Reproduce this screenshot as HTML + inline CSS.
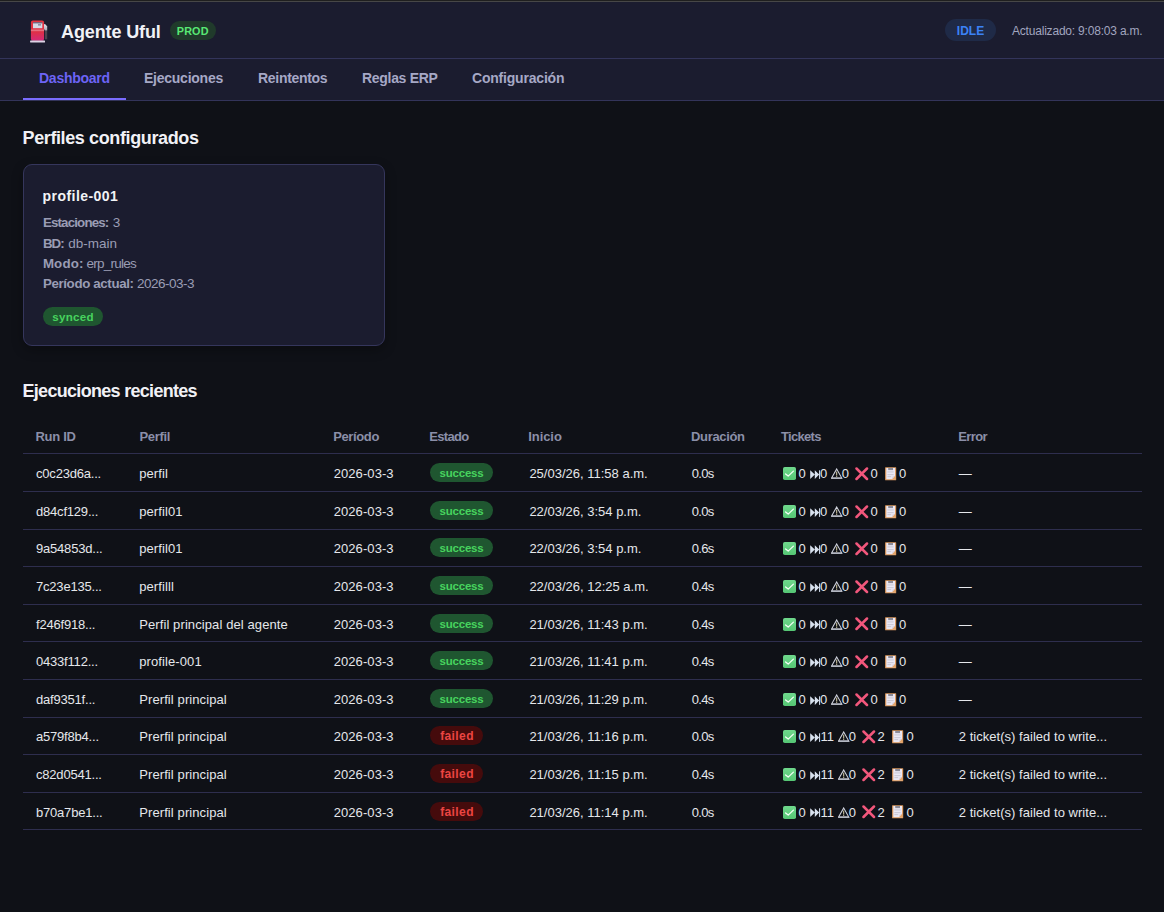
<!DOCTYPE html>
<html><head><meta charset="utf-8">
<style>
*{box-sizing:border-box;margin:0;padding:0}
html,body{width:1164px;height:912px;overflow:hidden;background:#0f1117;font-family:"Liberation Sans",sans-serif;color:#e5e7eb}
.a{position:absolute;white-space:nowrap}
#tb0{left:0;top:0;width:1164px;height:1px;background:#1f1f1f}
#tb1{left:0;top:1px;width:1164px;height:1px;background:#474747}
#hdr{left:0;top:2px;width:1164px;height:57px;background:#1b1c2f;border-bottom:1px solid #33345a}
#nav{left:0;top:59px;width:1164px;height:42px;background:#1b1c2f;border-bottom:1px solid #33345a}
.title{font-weight:700;font-size:18px;color:#f1f1f6;line-height:20px}
.pill{border-radius:999px;font-weight:700;text-align:center}
.tab{font-weight:700;font-size:14px;color:#a6a8c6;line-height:16px}
.h2{font-weight:700;font-size:18px;color:#f1f1f6;line-height:20px}
#card{left:23px;top:164px;width:362px;height:182px;background:#1b1c2f;border:1px solid #35365c;border-radius:9px;box-shadow:0 4px 12px rgba(0,0,0,.3)}
.kv{font-size:13px;color:#9a9cb4;line-height:16px}
.kv b{color:#9a9cb4}
.th{font-weight:700;font-size:13px;color:#8b8fa8;line-height:16px}
.td{font-size:13px;color:#e5e7eb;line-height:16px}
.hl{left:23px;width:1119px;height:1px;background:#2e2e4e}
.ic{position:absolute;line-height:0}
.ic svg{display:block}
</style></head><body>
<div id="tb0" class="a"></div><div id="tb1" class="a"></div>
<div id="hdr" class="a"></div>
<div id="nav" class="a"></div>

<div class="ic" style="left:30px;top:19.5px"><svg width="18" height="23" viewBox="0 0 18 23">
<defs><linearGradient id="pg" x1="0" y1="0" x2="0" y2="1"><stop offset="0" stop-color="#e5323f"/><stop offset="0.55" stop-color="#df3045"/><stop offset="1" stop-color="#d42a7a"/></linearGradient>
<linearGradient id="hg" x1="0" y1="0" x2="0" y2="1"><stop offset="0" stop-color="#e4e4ec"/><stop offset="1" stop-color="#a9a6b4"/></linearGradient></defs>
<rect x="0.9" y="0.4" width="13.2" height="20.4" rx="2" fill="url(#pg)"/>
<rect x="3" y="2.4" width="9.3" height="5.8" fill="#d6d9e6"/>
<rect x="3" y="2.4" width="9.3" height="0.9" fill="#3f3f5c"/>
<rect x="8" y="4.5" width="3" height="0.8" fill="#4a4868"/>
<rect x="0.9" y="9.5" width="13.2" height="1.7" fill="#e57b8a" opacity="0.85"/>
<path d="M15 10.4 L17.2 10.4 L17.2 19.3 L15 19.3 Z" fill="#4b4550"/>
<path d="M14 4.1 L15.6 4.6 L17.2 6.6 L17.2 10.4 L15 10.4 L14 9 Z" fill="url(#hg)"/>
<rect x="0.1" y="20.5" width="14.9" height="2" rx="0.5" fill="#ddd3e6"/>
</svg></div>
<div class="a title" style="left:61px;top:22px;letter-spacing:-0.12px">Agente Uful</div>
<div class="a pill" style="left:170px;top:21px;width:46px;height:19px;background:#203a2b;color:#58e874;font-size:10.8px;line-height:20px;letter-spacing:0.15px;padding-right:0.6px">PROD</div>
<div class="a pill" style="left:945px;top:19px;width:51px;height:22px;background:#1f2a47;color:#3b82f6;font-size:12px;line-height:24px">IDLE</div>
<div class="a" style="left:1012px;top:24px;font-size:12px;letter-spacing:-0.2px;line-height:14px;color:#a1a5bf">Actualizado: 9:08:03 a.m.</div>
<div class="a tab" style="left:39px;top:70px;color:#6d64f6;letter-spacing:-0.25px">Dashboard</div>
<div class="a tab" style="left:144px;top:70px;color:#a6a8c6;letter-spacing:-0.25px">Ejecuciones</div>
<div class="a tab" style="left:258px;top:70px;color:#a6a8c6;letter-spacing:-0.3px">Reintentos</div>
<div class="a tab" style="left:362px;top:70px;color:#a6a8c6;letter-spacing:-0.3px">Reglas ERP</div>
<div class="a tab" style="left:472px;top:70px;color:#a6a8c6;letter-spacing:-0.2px">Configuración</div>
<div class="a" style="left:23px;top:98px;width:103px;height:2px;background:#7a6cff"></div>
<div class="a h2" style="left:22.5px;top:128px;font-size:18px;letter-spacing:-0.38px">Perfiles configurados</div>
<div id="card" class="a"></div>
<div class="a" style="left:42.5px;top:188px;font-size:14px;font-weight:700;color:#f3f4f6;line-height:16px;letter-spacing:0.46px">profile-001</div>
<div class="a kv" style="left:42.9px;top:215px;font-weight:700;font-size:13.3px;letter-spacing:-0.83px">Estaciones:</div>
<div class="a kv" style="left:112.7px;top:215px;font-size:13.5px;letter-spacing:0px">3</div>
<div class="a kv" style="left:42.9px;top:236px;font-weight:700;font-size:13.3px;letter-spacing:-0.95px">BD:</div>
<div class="a kv" style="left:68.2px;top:236px;font-size:13.5px;letter-spacing:0px">db-main</div>
<div class="a kv" style="left:42.9px;top:256px;font-weight:700;font-size:13.3px;letter-spacing:0.15px">Modo:</div>
<div class="a kv" style="left:86.4px;top:256px;font-size:13.5px;letter-spacing:-0.74px">erp_rules</div>
<div class="a kv" style="left:42.9px;top:276px;font-weight:700;font-size:13.3px;letter-spacing:-0.35px">Período actual:</div>
<div class="a kv" style="left:137px;top:276px;font-size:13.5px;letter-spacing:-0.52px">2026-03-3</div>
<div class="a pill" style="left:43px;top:307px;width:60px;height:19px;background:#1f5630;color:#47d35e;font-size:11.6px;line-height:20px;letter-spacing:0.25px">synced</div>
<div class="a h2" style="left:22.5px;top:381px;font-size:18px;letter-spacing:-0.7px">Ejecuciones recientes</div>
<div class="a th" style="left:35.5px;top:429px;letter-spacing:-0.3px">Run ID</div>
<div class="a th" style="left:139.4px;top:429px;letter-spacing:-0.32px">Perfil</div>
<div class="a th" style="left:333.2px;top:429px;letter-spacing:-0.37px">Período</div>
<div class="a th" style="left:429.3px;top:429px;letter-spacing:-0.68px">Estado</div>
<div class="a th" style="left:528.3px;top:429px;letter-spacing:-0.08px">Inicio</div>
<div class="a th" style="left:691.1px;top:429px;letter-spacing:-0.36px">Duración</div>
<div class="a th" style="left:781.1px;top:429px;letter-spacing:-0.7px">Tickets</div>
<div class="a th" style="left:958.2px;top:429px;letter-spacing:-0.58px">Error</div>
<div class="a hl" style="top:453.4px"></div>
<div class="a td" style="left:36px;top:466.00px;letter-spacing:-0.2px">c0c23d6a...</div>
<div class="a td" style="left:139.2px;top:466.00px;letter-spacing:0.1px">perfil</div>
<div class="a td" style="left:333.7px;top:466.00px;letter-spacing:0.08px">2026-03-3</div>
<div class="a td" style="left:529.4px;top:466.00px;letter-spacing:0px">25/03/26, 11:58 a.m.</div>
<div class="a td" style="left:691.7px;top:466.00px;letter-spacing:-0.7px">0.0s</div>
<div class="a td" style="left:958.8px;top:466.00px;letter-spacing:0.03px">—</div>
<div class="a pill" style="left:430px;top:463.10px;width:63px;height:19px;background:#1f5630;color:#47d35e;font-size:11.5px;line-height:21px;letter-spacing:-0.2px">success</div>
<div class="ic" style="left:783px;top:467.20px"><svg width="13" height="13" viewBox="0 0 13 13"><defs><linearGradient id="cg" x1="0" y1="0" x2="0" y2="1"><stop offset="0" stop-color="#6fd88c"/><stop offset="1" stop-color="#55c674"/></linearGradient></defs><rect x="0" y="0" width="13" height="13" rx="1.8" fill="url(#cg)"/><path d="M2.6 6.9 L5.2 9.1 L10.4 4.1" stroke="#f4fff6" stroke-width="1.3" fill="none" stroke-linecap="round" stroke-linejoin="round"/></svg></div>
<div class="a td" style="left:798.4px;top:466.00px">0</div>
<div class="ic" style="left:809.8px;top:470.00px"><svg width="11" height="10" viewBox="0 0 11 10"><path d="M0.2 0.3 L4.8 4.6 L0.2 8.9 Z M4.8 0.3 L9.2 4.6 L4.8 8.9 Z" fill="#d9e2ef"/><rect x="9.0" y="0.3" width="1.1" height="8.6" fill="#c9d3e2"/></svg></div>
<div class="a td" style="left:820.1px;top:466.00px">0</div>
<div class="ic" style="left:830.6px;top:468.10px"><svg width="12" height="11" viewBox="0 0 12 11"><path d="M5.7 0.9 L10.8 10.1 L0.6 10.1 Z" fill="none" stroke="#cfd2dc" stroke-width="1.05" stroke-linejoin="miter"/><rect x="0.4" y="9.6" width="10.7" height="1.2" fill="#b9bcc8"/><rect x="5.2" y="3.6" width="1" height="4" fill="#d8cfa8"/><rect x="5.2" y="8.1" width="1" height="0.9" fill="#d8cfa8"/></svg></div>
<div class="a td" style="left:841.8px;top:466.00px">0</div>
<div class="ic" style="left:854.8px;top:467.00px"><svg width="14" height="14" viewBox="0 0 14 14"><path d="M1.5 1.5 L12 12 M12 1.5 L1.5 12" stroke="#f2577c" stroke-width="2.5" stroke-linecap="round"/></svg></div>
<div class="a td" style="left:870.4px;top:466.00px">0</div>
<div class="ic" style="left:884.8px;top:467.00px"><svg width="12" height="14" viewBox="0 0 12 14"><rect x="0.1" y="0.2" width="11.1" height="13.1" rx="0.6" fill="#dd9c62"/><rect x="1.3" y="1.0" width="8.7" height="11.2" fill="#ebe8f4"/><path d="M6.8 12.2 L10 12.2 L10 8.8 Z" fill="#e3a468"/><path d="M6.8 12.2 L10 8.8 L7.4 9.4 Z" fill="#d8d2e2"/><rect x="3.2" y="1.0" width="4.8" height="2.1" fill="#8d8c98"/><rect x="2.4" y="4.6" width="6.2" height="0.7" fill="#b9b8c6"/><rect x="2.4" y="7.4" width="6.2" height="0.7" fill="#b9b8c6"/><rect x="2.4" y="9.4" width="3.8" height="0.7" fill="#b9b8c6"/></svg></div>
<div class="a td" style="left:898.9px;top:466.00px">0</div>
<div class="a hl" style="top:491.00px"></div>
<div class="a td" style="left:36px;top:504.00px;letter-spacing:-0.2px">d84cf129...</div>
<div class="a td" style="left:139.2px;top:504.00px;letter-spacing:0.1px">perfil01</div>
<div class="a td" style="left:333.7px;top:504.00px;letter-spacing:0.08px">2026-03-3</div>
<div class="a td" style="left:529.4px;top:504.00px;letter-spacing:0px">22/03/26, 3:54 p.m.</div>
<div class="a td" style="left:691.7px;top:504.00px;letter-spacing:-0.7px">0.0s</div>
<div class="a td" style="left:958.8px;top:504.00px;letter-spacing:0.03px">—</div>
<div class="a pill" style="left:430px;top:500.70px;width:63px;height:19px;background:#1f5630;color:#47d35e;font-size:11.5px;line-height:21px;letter-spacing:-0.2px">success</div>
<div class="ic" style="left:783px;top:504.80px"><svg width="13" height="13" viewBox="0 0 13 13"><defs><linearGradient id="cg" x1="0" y1="0" x2="0" y2="1"><stop offset="0" stop-color="#6fd88c"/><stop offset="1" stop-color="#55c674"/></linearGradient></defs><rect x="0" y="0" width="13" height="13" rx="1.8" fill="url(#cg)"/><path d="M2.6 6.9 L5.2 9.1 L10.4 4.1" stroke="#f4fff6" stroke-width="1.3" fill="none" stroke-linecap="round" stroke-linejoin="round"/></svg></div>
<div class="a td" style="left:798.4px;top:504.00px">0</div>
<div class="ic" style="left:809.8px;top:507.60px"><svg width="11" height="10" viewBox="0 0 11 10"><path d="M0.2 0.3 L4.8 4.6 L0.2 8.9 Z M4.8 0.3 L9.2 4.6 L4.8 8.9 Z" fill="#d9e2ef"/><rect x="9.0" y="0.3" width="1.1" height="8.6" fill="#c9d3e2"/></svg></div>
<div class="a td" style="left:820.1px;top:504.00px">0</div>
<div class="ic" style="left:830.6px;top:505.70px"><svg width="12" height="11" viewBox="0 0 12 11"><path d="M5.7 0.9 L10.8 10.1 L0.6 10.1 Z" fill="none" stroke="#cfd2dc" stroke-width="1.05" stroke-linejoin="miter"/><rect x="0.4" y="9.6" width="10.7" height="1.2" fill="#b9bcc8"/><rect x="5.2" y="3.6" width="1" height="4" fill="#d8cfa8"/><rect x="5.2" y="8.1" width="1" height="0.9" fill="#d8cfa8"/></svg></div>
<div class="a td" style="left:841.8px;top:504.00px">0</div>
<div class="ic" style="left:854.8px;top:504.60px"><svg width="14" height="14" viewBox="0 0 14 14"><path d="M1.5 1.5 L12 12 M12 1.5 L1.5 12" stroke="#f2577c" stroke-width="2.5" stroke-linecap="round"/></svg></div>
<div class="a td" style="left:870.4px;top:504.00px">0</div>
<div class="ic" style="left:884.8px;top:504.60px"><svg width="12" height="14" viewBox="0 0 12 14"><rect x="0.1" y="0.2" width="11.1" height="13.1" rx="0.6" fill="#dd9c62"/><rect x="1.3" y="1.0" width="8.7" height="11.2" fill="#ebe8f4"/><path d="M6.8 12.2 L10 12.2 L10 8.8 Z" fill="#e3a468"/><path d="M6.8 12.2 L10 8.8 L7.4 9.4 Z" fill="#d8d2e2"/><rect x="3.2" y="1.0" width="4.8" height="2.1" fill="#8d8c98"/><rect x="2.4" y="4.6" width="6.2" height="0.7" fill="#b9b8c6"/><rect x="2.4" y="7.4" width="6.2" height="0.7" fill="#b9b8c6"/><rect x="2.4" y="9.4" width="3.8" height="0.7" fill="#b9b8c6"/></svg></div>
<div class="a td" style="left:898.9px;top:504.00px">0</div>
<div class="a hl" style="top:528.60px"></div>
<div class="a td" style="left:36px;top:541.00px;letter-spacing:-0.2px">9a54853d...</div>
<div class="a td" style="left:139.2px;top:541.00px;letter-spacing:0.1px">perfil01</div>
<div class="a td" style="left:333.7px;top:541.00px;letter-spacing:0.08px">2026-03-3</div>
<div class="a td" style="left:529.4px;top:541.00px;letter-spacing:0px">22/03/26, 3:54 p.m.</div>
<div class="a td" style="left:691.7px;top:541.00px;letter-spacing:-0.7px">0.6s</div>
<div class="a td" style="left:958.8px;top:541.00px;letter-spacing:0.03px">—</div>
<div class="a pill" style="left:430px;top:538.30px;width:63px;height:19px;background:#1f5630;color:#47d35e;font-size:11.5px;line-height:21px;letter-spacing:-0.2px">success</div>
<div class="ic" style="left:783px;top:542.40px"><svg width="13" height="13" viewBox="0 0 13 13"><defs><linearGradient id="cg" x1="0" y1="0" x2="0" y2="1"><stop offset="0" stop-color="#6fd88c"/><stop offset="1" stop-color="#55c674"/></linearGradient></defs><rect x="0" y="0" width="13" height="13" rx="1.8" fill="url(#cg)"/><path d="M2.6 6.9 L5.2 9.1 L10.4 4.1" stroke="#f4fff6" stroke-width="1.3" fill="none" stroke-linecap="round" stroke-linejoin="round"/></svg></div>
<div class="a td" style="left:798.4px;top:541.00px">0</div>
<div class="ic" style="left:809.8px;top:545.20px"><svg width="11" height="10" viewBox="0 0 11 10"><path d="M0.2 0.3 L4.8 4.6 L0.2 8.9 Z M4.8 0.3 L9.2 4.6 L4.8 8.9 Z" fill="#d9e2ef"/><rect x="9.0" y="0.3" width="1.1" height="8.6" fill="#c9d3e2"/></svg></div>
<div class="a td" style="left:820.1px;top:541.00px">0</div>
<div class="ic" style="left:830.6px;top:543.30px"><svg width="12" height="11" viewBox="0 0 12 11"><path d="M5.7 0.9 L10.8 10.1 L0.6 10.1 Z" fill="none" stroke="#cfd2dc" stroke-width="1.05" stroke-linejoin="miter"/><rect x="0.4" y="9.6" width="10.7" height="1.2" fill="#b9bcc8"/><rect x="5.2" y="3.6" width="1" height="4" fill="#d8cfa8"/><rect x="5.2" y="8.1" width="1" height="0.9" fill="#d8cfa8"/></svg></div>
<div class="a td" style="left:841.8px;top:541.00px">0</div>
<div class="ic" style="left:854.8px;top:542.20px"><svg width="14" height="14" viewBox="0 0 14 14"><path d="M1.5 1.5 L12 12 M12 1.5 L1.5 12" stroke="#f2577c" stroke-width="2.5" stroke-linecap="round"/></svg></div>
<div class="a td" style="left:870.4px;top:541.00px">0</div>
<div class="ic" style="left:884.8px;top:542.20px"><svg width="12" height="14" viewBox="0 0 12 14"><rect x="0.1" y="0.2" width="11.1" height="13.1" rx="0.6" fill="#dd9c62"/><rect x="1.3" y="1.0" width="8.7" height="11.2" fill="#ebe8f4"/><path d="M6.8 12.2 L10 12.2 L10 8.8 Z" fill="#e3a468"/><path d="M6.8 12.2 L10 8.8 L7.4 9.4 Z" fill="#d8d2e2"/><rect x="3.2" y="1.0" width="4.8" height="2.1" fill="#8d8c98"/><rect x="2.4" y="4.6" width="6.2" height="0.7" fill="#b9b8c6"/><rect x="2.4" y="7.4" width="6.2" height="0.7" fill="#b9b8c6"/><rect x="2.4" y="9.4" width="3.8" height="0.7" fill="#b9b8c6"/></svg></div>
<div class="a td" style="left:898.9px;top:541.00px">0</div>
<div class="a hl" style="top:566.20px"></div>
<div class="a td" style="left:36px;top:579.00px;letter-spacing:-0.2px">7c23e135...</div>
<div class="a td" style="left:139.2px;top:579.00px;letter-spacing:0.1px">perfilll</div>
<div class="a td" style="left:333.7px;top:579.00px;letter-spacing:0.08px">2026-03-3</div>
<div class="a td" style="left:529.4px;top:579.00px;letter-spacing:0px">22/03/26, 12:25 a.m.</div>
<div class="a td" style="left:691.7px;top:579.00px;letter-spacing:-0.7px">0.4s</div>
<div class="a td" style="left:958.8px;top:579.00px;letter-spacing:0.03px">—</div>
<div class="a pill" style="left:430px;top:575.90px;width:63px;height:19px;background:#1f5630;color:#47d35e;font-size:11.5px;line-height:21px;letter-spacing:-0.2px">success</div>
<div class="ic" style="left:783px;top:580.00px"><svg width="13" height="13" viewBox="0 0 13 13"><defs><linearGradient id="cg" x1="0" y1="0" x2="0" y2="1"><stop offset="0" stop-color="#6fd88c"/><stop offset="1" stop-color="#55c674"/></linearGradient></defs><rect x="0" y="0" width="13" height="13" rx="1.8" fill="url(#cg)"/><path d="M2.6 6.9 L5.2 9.1 L10.4 4.1" stroke="#f4fff6" stroke-width="1.3" fill="none" stroke-linecap="round" stroke-linejoin="round"/></svg></div>
<div class="a td" style="left:798.4px;top:579.00px">0</div>
<div class="ic" style="left:809.8px;top:582.80px"><svg width="11" height="10" viewBox="0 0 11 10"><path d="M0.2 0.3 L4.8 4.6 L0.2 8.9 Z M4.8 0.3 L9.2 4.6 L4.8 8.9 Z" fill="#d9e2ef"/><rect x="9.0" y="0.3" width="1.1" height="8.6" fill="#c9d3e2"/></svg></div>
<div class="a td" style="left:820.1px;top:579.00px">0</div>
<div class="ic" style="left:830.6px;top:580.90px"><svg width="12" height="11" viewBox="0 0 12 11"><path d="M5.7 0.9 L10.8 10.1 L0.6 10.1 Z" fill="none" stroke="#cfd2dc" stroke-width="1.05" stroke-linejoin="miter"/><rect x="0.4" y="9.6" width="10.7" height="1.2" fill="#b9bcc8"/><rect x="5.2" y="3.6" width="1" height="4" fill="#d8cfa8"/><rect x="5.2" y="8.1" width="1" height="0.9" fill="#d8cfa8"/></svg></div>
<div class="a td" style="left:841.8px;top:579.00px">0</div>
<div class="ic" style="left:854.8px;top:579.80px"><svg width="14" height="14" viewBox="0 0 14 14"><path d="M1.5 1.5 L12 12 M12 1.5 L1.5 12" stroke="#f2577c" stroke-width="2.5" stroke-linecap="round"/></svg></div>
<div class="a td" style="left:870.4px;top:579.00px">0</div>
<div class="ic" style="left:884.8px;top:579.80px"><svg width="12" height="14" viewBox="0 0 12 14"><rect x="0.1" y="0.2" width="11.1" height="13.1" rx="0.6" fill="#dd9c62"/><rect x="1.3" y="1.0" width="8.7" height="11.2" fill="#ebe8f4"/><path d="M6.8 12.2 L10 12.2 L10 8.8 Z" fill="#e3a468"/><path d="M6.8 12.2 L10 8.8 L7.4 9.4 Z" fill="#d8d2e2"/><rect x="3.2" y="1.0" width="4.8" height="2.1" fill="#8d8c98"/><rect x="2.4" y="4.6" width="6.2" height="0.7" fill="#b9b8c6"/><rect x="2.4" y="7.4" width="6.2" height="0.7" fill="#b9b8c6"/><rect x="2.4" y="9.4" width="3.8" height="0.7" fill="#b9b8c6"/></svg></div>
<div class="a td" style="left:898.9px;top:579.00px">0</div>
<div class="a hl" style="top:603.80px"></div>
<div class="a td" style="left:36px;top:617.00px;letter-spacing:-0.2px">f246f918...</div>
<div class="a td" style="left:139.2px;top:617.00px;letter-spacing:0.1px">Perfil principal del agente</div>
<div class="a td" style="left:333.7px;top:617.00px;letter-spacing:0.08px">2026-03-3</div>
<div class="a td" style="left:529.4px;top:617.00px;letter-spacing:0px">21/03/26, 11:43 p.m.</div>
<div class="a td" style="left:691.7px;top:617.00px;letter-spacing:-0.7px">0.4s</div>
<div class="a td" style="left:958.8px;top:617.00px;letter-spacing:0.03px">—</div>
<div class="a pill" style="left:430px;top:613.50px;width:63px;height:19px;background:#1f5630;color:#47d35e;font-size:11.5px;line-height:21px;letter-spacing:-0.2px">success</div>
<div class="ic" style="left:783px;top:617.60px"><svg width="13" height="13" viewBox="0 0 13 13"><defs><linearGradient id="cg" x1="0" y1="0" x2="0" y2="1"><stop offset="0" stop-color="#6fd88c"/><stop offset="1" stop-color="#55c674"/></linearGradient></defs><rect x="0" y="0" width="13" height="13" rx="1.8" fill="url(#cg)"/><path d="M2.6 6.9 L5.2 9.1 L10.4 4.1" stroke="#f4fff6" stroke-width="1.3" fill="none" stroke-linecap="round" stroke-linejoin="round"/></svg></div>
<div class="a td" style="left:798.4px;top:617.00px">0</div>
<div class="ic" style="left:809.8px;top:620.40px"><svg width="11" height="10" viewBox="0 0 11 10"><path d="M0.2 0.3 L4.8 4.6 L0.2 8.9 Z M4.8 0.3 L9.2 4.6 L4.8 8.9 Z" fill="#d9e2ef"/><rect x="9.0" y="0.3" width="1.1" height="8.6" fill="#c9d3e2"/></svg></div>
<div class="a td" style="left:820.1px;top:617.00px">0</div>
<div class="ic" style="left:830.6px;top:618.50px"><svg width="12" height="11" viewBox="0 0 12 11"><path d="M5.7 0.9 L10.8 10.1 L0.6 10.1 Z" fill="none" stroke="#cfd2dc" stroke-width="1.05" stroke-linejoin="miter"/><rect x="0.4" y="9.6" width="10.7" height="1.2" fill="#b9bcc8"/><rect x="5.2" y="3.6" width="1" height="4" fill="#d8cfa8"/><rect x="5.2" y="8.1" width="1" height="0.9" fill="#d8cfa8"/></svg></div>
<div class="a td" style="left:841.8px;top:617.00px">0</div>
<div class="ic" style="left:854.8px;top:617.40px"><svg width="14" height="14" viewBox="0 0 14 14"><path d="M1.5 1.5 L12 12 M12 1.5 L1.5 12" stroke="#f2577c" stroke-width="2.5" stroke-linecap="round"/></svg></div>
<div class="a td" style="left:870.4px;top:617.00px">0</div>
<div class="ic" style="left:884.8px;top:617.40px"><svg width="12" height="14" viewBox="0 0 12 14"><rect x="0.1" y="0.2" width="11.1" height="13.1" rx="0.6" fill="#dd9c62"/><rect x="1.3" y="1.0" width="8.7" height="11.2" fill="#ebe8f4"/><path d="M6.8 12.2 L10 12.2 L10 8.8 Z" fill="#e3a468"/><path d="M6.8 12.2 L10 8.8 L7.4 9.4 Z" fill="#d8d2e2"/><rect x="3.2" y="1.0" width="4.8" height="2.1" fill="#8d8c98"/><rect x="2.4" y="4.6" width="6.2" height="0.7" fill="#b9b8c6"/><rect x="2.4" y="7.4" width="6.2" height="0.7" fill="#b9b8c6"/><rect x="2.4" y="9.4" width="3.8" height="0.7" fill="#b9b8c6"/></svg></div>
<div class="a td" style="left:898.9px;top:617.00px">0</div>
<div class="a hl" style="top:641.40px"></div>
<div class="a td" style="left:36px;top:654.00px;letter-spacing:-0.2px">0433f112...</div>
<div class="a td" style="left:139.2px;top:654.00px;letter-spacing:0.1px">profile-001</div>
<div class="a td" style="left:333.7px;top:654.00px;letter-spacing:0.08px">2026-03-3</div>
<div class="a td" style="left:529.4px;top:654.00px;letter-spacing:0px">21/03/26, 11:41 p.m.</div>
<div class="a td" style="left:691.7px;top:654.00px;letter-spacing:-0.7px">0.4s</div>
<div class="a td" style="left:958.8px;top:654.00px;letter-spacing:0.03px">—</div>
<div class="a pill" style="left:430px;top:651.10px;width:63px;height:19px;background:#1f5630;color:#47d35e;font-size:11.5px;line-height:21px;letter-spacing:-0.2px">success</div>
<div class="ic" style="left:783px;top:655.20px"><svg width="13" height="13" viewBox="0 0 13 13"><defs><linearGradient id="cg" x1="0" y1="0" x2="0" y2="1"><stop offset="0" stop-color="#6fd88c"/><stop offset="1" stop-color="#55c674"/></linearGradient></defs><rect x="0" y="0" width="13" height="13" rx="1.8" fill="url(#cg)"/><path d="M2.6 6.9 L5.2 9.1 L10.4 4.1" stroke="#f4fff6" stroke-width="1.3" fill="none" stroke-linecap="round" stroke-linejoin="round"/></svg></div>
<div class="a td" style="left:798.4px;top:654.00px">0</div>
<div class="ic" style="left:809.8px;top:658.00px"><svg width="11" height="10" viewBox="0 0 11 10"><path d="M0.2 0.3 L4.8 4.6 L0.2 8.9 Z M4.8 0.3 L9.2 4.6 L4.8 8.9 Z" fill="#d9e2ef"/><rect x="9.0" y="0.3" width="1.1" height="8.6" fill="#c9d3e2"/></svg></div>
<div class="a td" style="left:820.1px;top:654.00px">0</div>
<div class="ic" style="left:830.6px;top:656.10px"><svg width="12" height="11" viewBox="0 0 12 11"><path d="M5.7 0.9 L10.8 10.1 L0.6 10.1 Z" fill="none" stroke="#cfd2dc" stroke-width="1.05" stroke-linejoin="miter"/><rect x="0.4" y="9.6" width="10.7" height="1.2" fill="#b9bcc8"/><rect x="5.2" y="3.6" width="1" height="4" fill="#d8cfa8"/><rect x="5.2" y="8.1" width="1" height="0.9" fill="#d8cfa8"/></svg></div>
<div class="a td" style="left:841.8px;top:654.00px">0</div>
<div class="ic" style="left:854.8px;top:655.00px"><svg width="14" height="14" viewBox="0 0 14 14"><path d="M1.5 1.5 L12 12 M12 1.5 L1.5 12" stroke="#f2577c" stroke-width="2.5" stroke-linecap="round"/></svg></div>
<div class="a td" style="left:870.4px;top:654.00px">0</div>
<div class="ic" style="left:884.8px;top:655.00px"><svg width="12" height="14" viewBox="0 0 12 14"><rect x="0.1" y="0.2" width="11.1" height="13.1" rx="0.6" fill="#dd9c62"/><rect x="1.3" y="1.0" width="8.7" height="11.2" fill="#ebe8f4"/><path d="M6.8 12.2 L10 12.2 L10 8.8 Z" fill="#e3a468"/><path d="M6.8 12.2 L10 8.8 L7.4 9.4 Z" fill="#d8d2e2"/><rect x="3.2" y="1.0" width="4.8" height="2.1" fill="#8d8c98"/><rect x="2.4" y="4.6" width="6.2" height="0.7" fill="#b9b8c6"/><rect x="2.4" y="7.4" width="6.2" height="0.7" fill="#b9b8c6"/><rect x="2.4" y="9.4" width="3.8" height="0.7" fill="#b9b8c6"/></svg></div>
<div class="a td" style="left:898.9px;top:654.00px">0</div>
<div class="a hl" style="top:679.00px"></div>
<div class="a td" style="left:36px;top:692.00px;letter-spacing:-0.2px">daf9351f...</div>
<div class="a td" style="left:139.2px;top:692.00px;letter-spacing:0.1px">Prerfil principal</div>
<div class="a td" style="left:333.7px;top:692.00px;letter-spacing:0.08px">2026-03-3</div>
<div class="a td" style="left:529.4px;top:692.00px;letter-spacing:0px">21/03/26, 11:29 p.m.</div>
<div class="a td" style="left:691.7px;top:692.00px;letter-spacing:-0.7px">0.4s</div>
<div class="a td" style="left:958.8px;top:692.00px;letter-spacing:0.03px">—</div>
<div class="a pill" style="left:430px;top:688.70px;width:63px;height:19px;background:#1f5630;color:#47d35e;font-size:11.5px;line-height:21px;letter-spacing:-0.2px">success</div>
<div class="ic" style="left:783px;top:692.80px"><svg width="13" height="13" viewBox="0 0 13 13"><defs><linearGradient id="cg" x1="0" y1="0" x2="0" y2="1"><stop offset="0" stop-color="#6fd88c"/><stop offset="1" stop-color="#55c674"/></linearGradient></defs><rect x="0" y="0" width="13" height="13" rx="1.8" fill="url(#cg)"/><path d="M2.6 6.9 L5.2 9.1 L10.4 4.1" stroke="#f4fff6" stroke-width="1.3" fill="none" stroke-linecap="round" stroke-linejoin="round"/></svg></div>
<div class="a td" style="left:798.4px;top:692.00px">0</div>
<div class="ic" style="left:809.8px;top:695.60px"><svg width="11" height="10" viewBox="0 0 11 10"><path d="M0.2 0.3 L4.8 4.6 L0.2 8.9 Z M4.8 0.3 L9.2 4.6 L4.8 8.9 Z" fill="#d9e2ef"/><rect x="9.0" y="0.3" width="1.1" height="8.6" fill="#c9d3e2"/></svg></div>
<div class="a td" style="left:820.1px;top:692.00px">0</div>
<div class="ic" style="left:830.6px;top:693.70px"><svg width="12" height="11" viewBox="0 0 12 11"><path d="M5.7 0.9 L10.8 10.1 L0.6 10.1 Z" fill="none" stroke="#cfd2dc" stroke-width="1.05" stroke-linejoin="miter"/><rect x="0.4" y="9.6" width="10.7" height="1.2" fill="#b9bcc8"/><rect x="5.2" y="3.6" width="1" height="4" fill="#d8cfa8"/><rect x="5.2" y="8.1" width="1" height="0.9" fill="#d8cfa8"/></svg></div>
<div class="a td" style="left:841.8px;top:692.00px">0</div>
<div class="ic" style="left:854.8px;top:692.60px"><svg width="14" height="14" viewBox="0 0 14 14"><path d="M1.5 1.5 L12 12 M12 1.5 L1.5 12" stroke="#f2577c" stroke-width="2.5" stroke-linecap="round"/></svg></div>
<div class="a td" style="left:870.4px;top:692.00px">0</div>
<div class="ic" style="left:884.8px;top:692.60px"><svg width="12" height="14" viewBox="0 0 12 14"><rect x="0.1" y="0.2" width="11.1" height="13.1" rx="0.6" fill="#dd9c62"/><rect x="1.3" y="1.0" width="8.7" height="11.2" fill="#ebe8f4"/><path d="M6.8 12.2 L10 12.2 L10 8.8 Z" fill="#e3a468"/><path d="M6.8 12.2 L10 8.8 L7.4 9.4 Z" fill="#d8d2e2"/><rect x="3.2" y="1.0" width="4.8" height="2.1" fill="#8d8c98"/><rect x="2.4" y="4.6" width="6.2" height="0.7" fill="#b9b8c6"/><rect x="2.4" y="7.4" width="6.2" height="0.7" fill="#b9b8c6"/><rect x="2.4" y="9.4" width="3.8" height="0.7" fill="#b9b8c6"/></svg></div>
<div class="a td" style="left:898.9px;top:692.00px">0</div>
<div class="a hl" style="top:716.60px"></div>
<div class="a td" style="left:36px;top:729.00px;letter-spacing:-0.2px">a579f8b4...</div>
<div class="a td" style="left:139.2px;top:729.00px;letter-spacing:0.1px">Prerfil principal</div>
<div class="a td" style="left:333.7px;top:729.00px;letter-spacing:0.08px">2026-03-3</div>
<div class="a td" style="left:529.4px;top:729.00px;letter-spacing:0px">21/03/26, 11:16 p.m.</div>
<div class="a td" style="left:691.7px;top:729.00px;letter-spacing:-0.7px">0.0s</div>
<div class="a td" style="left:958.8px;top:729.00px;letter-spacing:0.03px">2 ticket(s) failed to write...</div>
<div class="a pill" style="left:430px;top:726.30px;width:53px;height:19px;background:#450b0c;color:#ec4542;font-size:12px;line-height:20px;letter-spacing:0.4px;padding-left:1px">failed</div>
<div class="ic" style="left:783px;top:730.40px"><svg width="13" height="13" viewBox="0 0 13 13"><defs><linearGradient id="cg" x1="0" y1="0" x2="0" y2="1"><stop offset="0" stop-color="#6fd88c"/><stop offset="1" stop-color="#55c674"/></linearGradient></defs><rect x="0" y="0" width="13" height="13" rx="1.8" fill="url(#cg)"/><path d="M2.6 6.9 L5.2 9.1 L10.4 4.1" stroke="#f4fff6" stroke-width="1.3" fill="none" stroke-linecap="round" stroke-linejoin="round"/></svg></div>
<div class="a td" style="left:798.4px;top:729.00px">0</div>
<div class="ic" style="left:809.8px;top:733.20px"><svg width="11" height="10" viewBox="0 0 11 10"><path d="M0.2 0.3 L4.8 4.6 L0.2 8.9 Z M4.8 0.3 L9.2 4.6 L4.8 8.9 Z" fill="#d9e2ef"/><rect x="9.0" y="0.3" width="1.1" height="8.6" fill="#c9d3e2"/></svg></div>
<div class="a td" style="left:820.6px;top:729.00px">11</div>
<div class="ic" style="left:837.6px;top:731.30px"><svg width="12" height="11" viewBox="0 0 12 11"><path d="M5.7 0.9 L10.8 10.1 L0.6 10.1 Z" fill="none" stroke="#cfd2dc" stroke-width="1.05" stroke-linejoin="miter"/><rect x="0.4" y="9.6" width="10.7" height="1.2" fill="#b9bcc8"/><rect x="5.2" y="3.6" width="1" height="4" fill="#d8cfa8"/><rect x="5.2" y="8.1" width="1" height="0.9" fill="#d8cfa8"/></svg></div>
<div class="a td" style="left:848.8px;top:729.00px">0</div>
<div class="ic" style="left:862.4px;top:730.20px"><svg width="14" height="14" viewBox="0 0 14 14"><path d="M1.5 1.5 L12 12 M12 1.5 L1.5 12" stroke="#f2577c" stroke-width="2.5" stroke-linecap="round"/></svg></div>
<div class="a td" style="left:877.4px;top:729.00px">2</div>
<div class="ic" style="left:891.8px;top:730.20px"><svg width="12" height="14" viewBox="0 0 12 14"><rect x="0.1" y="0.2" width="11.1" height="13.1" rx="0.6" fill="#dd9c62"/><rect x="1.3" y="1.0" width="8.7" height="11.2" fill="#ebe8f4"/><path d="M6.8 12.2 L10 12.2 L10 8.8 Z" fill="#e3a468"/><path d="M6.8 12.2 L10 8.8 L7.4 9.4 Z" fill="#d8d2e2"/><rect x="3.2" y="1.0" width="4.8" height="2.1" fill="#8d8c98"/><rect x="2.4" y="4.6" width="6.2" height="0.7" fill="#b9b8c6"/><rect x="2.4" y="7.4" width="6.2" height="0.7" fill="#b9b8c6"/><rect x="2.4" y="9.4" width="3.8" height="0.7" fill="#b9b8c6"/></svg></div>
<div class="a td" style="left:906.4px;top:729.00px">0</div>
<div class="a hl" style="top:754.20px"></div>
<div class="a td" style="left:36px;top:767.00px;letter-spacing:-0.2px">c82d0541...</div>
<div class="a td" style="left:139.2px;top:767.00px;letter-spacing:0.1px">Prerfil principal</div>
<div class="a td" style="left:333.7px;top:767.00px;letter-spacing:0.08px">2026-03-3</div>
<div class="a td" style="left:529.4px;top:767.00px;letter-spacing:0px">21/03/26, 11:15 p.m.</div>
<div class="a td" style="left:691.7px;top:767.00px;letter-spacing:-0.7px">0.4s</div>
<div class="a td" style="left:958.8px;top:767.00px;letter-spacing:0.03px">2 ticket(s) failed to write...</div>
<div class="a pill" style="left:430px;top:763.90px;width:53px;height:19px;background:#450b0c;color:#ec4542;font-size:12px;line-height:20px;letter-spacing:0.4px;padding-left:1px">failed</div>
<div class="ic" style="left:783px;top:768.00px"><svg width="13" height="13" viewBox="0 0 13 13"><defs><linearGradient id="cg" x1="0" y1="0" x2="0" y2="1"><stop offset="0" stop-color="#6fd88c"/><stop offset="1" stop-color="#55c674"/></linearGradient></defs><rect x="0" y="0" width="13" height="13" rx="1.8" fill="url(#cg)"/><path d="M2.6 6.9 L5.2 9.1 L10.4 4.1" stroke="#f4fff6" stroke-width="1.3" fill="none" stroke-linecap="round" stroke-linejoin="round"/></svg></div>
<div class="a td" style="left:798.4px;top:767.00px">0</div>
<div class="ic" style="left:809.8px;top:770.80px"><svg width="11" height="10" viewBox="0 0 11 10"><path d="M0.2 0.3 L4.8 4.6 L0.2 8.9 Z M4.8 0.3 L9.2 4.6 L4.8 8.9 Z" fill="#d9e2ef"/><rect x="9.0" y="0.3" width="1.1" height="8.6" fill="#c9d3e2"/></svg></div>
<div class="a td" style="left:820.6px;top:767.00px">11</div>
<div class="ic" style="left:837.6px;top:768.90px"><svg width="12" height="11" viewBox="0 0 12 11"><path d="M5.7 0.9 L10.8 10.1 L0.6 10.1 Z" fill="none" stroke="#cfd2dc" stroke-width="1.05" stroke-linejoin="miter"/><rect x="0.4" y="9.6" width="10.7" height="1.2" fill="#b9bcc8"/><rect x="5.2" y="3.6" width="1" height="4" fill="#d8cfa8"/><rect x="5.2" y="8.1" width="1" height="0.9" fill="#d8cfa8"/></svg></div>
<div class="a td" style="left:848.8px;top:767.00px">0</div>
<div class="ic" style="left:862.4px;top:767.80px"><svg width="14" height="14" viewBox="0 0 14 14"><path d="M1.5 1.5 L12 12 M12 1.5 L1.5 12" stroke="#f2577c" stroke-width="2.5" stroke-linecap="round"/></svg></div>
<div class="a td" style="left:877.4px;top:767.00px">2</div>
<div class="ic" style="left:891.8px;top:767.80px"><svg width="12" height="14" viewBox="0 0 12 14"><rect x="0.1" y="0.2" width="11.1" height="13.1" rx="0.6" fill="#dd9c62"/><rect x="1.3" y="1.0" width="8.7" height="11.2" fill="#ebe8f4"/><path d="M6.8 12.2 L10 12.2 L10 8.8 Z" fill="#e3a468"/><path d="M6.8 12.2 L10 8.8 L7.4 9.4 Z" fill="#d8d2e2"/><rect x="3.2" y="1.0" width="4.8" height="2.1" fill="#8d8c98"/><rect x="2.4" y="4.6" width="6.2" height="0.7" fill="#b9b8c6"/><rect x="2.4" y="7.4" width="6.2" height="0.7" fill="#b9b8c6"/><rect x="2.4" y="9.4" width="3.8" height="0.7" fill="#b9b8c6"/></svg></div>
<div class="a td" style="left:906.4px;top:767.00px">0</div>
<div class="a hl" style="top:791.80px"></div>
<div class="a td" style="left:36px;top:805.00px;letter-spacing:-0.2px">b70a7be1...</div>
<div class="a td" style="left:139.2px;top:805.00px;letter-spacing:0.1px">Prerfil principal</div>
<div class="a td" style="left:333.7px;top:805.00px;letter-spacing:0.08px">2026-03-3</div>
<div class="a td" style="left:529.4px;top:805.00px;letter-spacing:0px">21/03/26, 11:14 p.m.</div>
<div class="a td" style="left:691.7px;top:805.00px;letter-spacing:-0.7px">0.0s</div>
<div class="a td" style="left:958.8px;top:805.00px;letter-spacing:0.03px">2 ticket(s) failed to write...</div>
<div class="a pill" style="left:430px;top:801.50px;width:53px;height:19px;background:#450b0c;color:#ec4542;font-size:12px;line-height:20px;letter-spacing:0.4px;padding-left:1px">failed</div>
<div class="ic" style="left:783px;top:805.60px"><svg width="13" height="13" viewBox="0 0 13 13"><defs><linearGradient id="cg" x1="0" y1="0" x2="0" y2="1"><stop offset="0" stop-color="#6fd88c"/><stop offset="1" stop-color="#55c674"/></linearGradient></defs><rect x="0" y="0" width="13" height="13" rx="1.8" fill="url(#cg)"/><path d="M2.6 6.9 L5.2 9.1 L10.4 4.1" stroke="#f4fff6" stroke-width="1.3" fill="none" stroke-linecap="round" stroke-linejoin="round"/></svg></div>
<div class="a td" style="left:798.4px;top:805.00px">0</div>
<div class="ic" style="left:809.8px;top:808.40px"><svg width="11" height="10" viewBox="0 0 11 10"><path d="M0.2 0.3 L4.8 4.6 L0.2 8.9 Z M4.8 0.3 L9.2 4.6 L4.8 8.9 Z" fill="#d9e2ef"/><rect x="9.0" y="0.3" width="1.1" height="8.6" fill="#c9d3e2"/></svg></div>
<div class="a td" style="left:820.6px;top:805.00px">11</div>
<div class="ic" style="left:837.6px;top:806.50px"><svg width="12" height="11" viewBox="0 0 12 11"><path d="M5.7 0.9 L10.8 10.1 L0.6 10.1 Z" fill="none" stroke="#cfd2dc" stroke-width="1.05" stroke-linejoin="miter"/><rect x="0.4" y="9.6" width="10.7" height="1.2" fill="#b9bcc8"/><rect x="5.2" y="3.6" width="1" height="4" fill="#d8cfa8"/><rect x="5.2" y="8.1" width="1" height="0.9" fill="#d8cfa8"/></svg></div>
<div class="a td" style="left:848.8px;top:805.00px">0</div>
<div class="ic" style="left:862.4px;top:805.40px"><svg width="14" height="14" viewBox="0 0 14 14"><path d="M1.5 1.5 L12 12 M12 1.5 L1.5 12" stroke="#f2577c" stroke-width="2.5" stroke-linecap="round"/></svg></div>
<div class="a td" style="left:877.4px;top:805.00px">2</div>
<div class="ic" style="left:891.8px;top:805.40px"><svg width="12" height="14" viewBox="0 0 12 14"><rect x="0.1" y="0.2" width="11.1" height="13.1" rx="0.6" fill="#dd9c62"/><rect x="1.3" y="1.0" width="8.7" height="11.2" fill="#ebe8f4"/><path d="M6.8 12.2 L10 12.2 L10 8.8 Z" fill="#e3a468"/><path d="M6.8 12.2 L10 8.8 L7.4 9.4 Z" fill="#d8d2e2"/><rect x="3.2" y="1.0" width="4.8" height="2.1" fill="#8d8c98"/><rect x="2.4" y="4.6" width="6.2" height="0.7" fill="#b9b8c6"/><rect x="2.4" y="7.4" width="6.2" height="0.7" fill="#b9b8c6"/><rect x="2.4" y="9.4" width="3.8" height="0.7" fill="#b9b8c6"/></svg></div>
<div class="a td" style="left:906.4px;top:805.00px">0</div>
<div class="a hl" style="top:829.40px"></div>
</body></html>
